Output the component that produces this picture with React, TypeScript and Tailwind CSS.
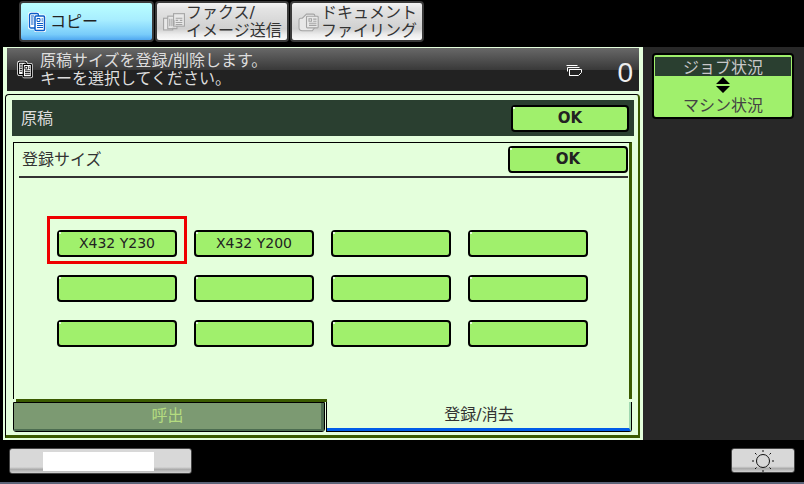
import type { ReactNode } from 'react';

const font = { fontFamily: '"DejaVu Sans", "Noto Sans CJK JP", sans-serif' };

function CopyIcon({ ink, bg = '#fff', w = 20, h = 22 }: { ink: string; bg?: string; w?: number; h?: number }) {
  return (
    <svg width={w} height={h} viewBox="0 0 20 22" aria-hidden>
      <path d="M1 3.500Q1 1 3.500 1h7Q13 1 13 3.500h3.500Q19 3.500 19 6v13.500Q19 21 17 21H8.500Q7 21 7 18.500H3Q1 18.500 1 16z" fill={bg} />
      <rect x="2.500" y="2.500" width="9" height="14.500" rx="1.500" fill="none" stroke={ink} strokeWidth="1.300" />
      <rect x="8" y="5" width="9.500" height="14.500" rx="1" fill={bg} stroke={ink} strokeWidth="1.500" />
      <path d="M10 7.500h3v3h-3zM14.500 8h1.500M14.500 10h1.500M10 12.500h6M10 14.500h6M10 16.500h6M4 5h3M4 7h2.500M4 9h2.500M4 11h2.500M4 13h2.500" fill="none" stroke={ink} strokeWidth="1" />
    </svg>
  );
}

function FaxIcon() {
  return (
    <svg width="24" height="20" viewBox="0 0 28 24" fill="#e8e8e8" stroke="#a4a4a4" strokeWidth="1.300" aria-hidden>
      <rect x="1.500" y="7.500" width="11" height="14" />
      <rect x="6.500" y="5" width="11" height="15" />
      <rect x="13.500" y="2" width="13" height="15" />
      <path d="M9 8v9M11.500 8v9M14 10v6M16 19.500h-4M16 7.500h8M16 10h3M21 10h3M16 12.500h8M16 15h8" fill="none" />
    </svg>
  );
}

function FilingIcon() {
  return (
    <svg width="24" height="20" viewBox="0 0 28 24" fill="#e8e8e8" stroke="#a4a4a4" strokeWidth="1.300" aria-hidden>
      <path d="M2 9.500q0-2 2-2h2l5-5h8q2 0 2 2v14l-3 4H6q-4 0-4-4z" />
      <rect x="11" y="5" width="14" height="14" rx="1" />
      <path d="M14 8h3v3h-3zM19 8.500h4M19 11h4M14 13.500h9M14 16h9" fill="none" />
    </svg>
  );
}

function TopTab({ active, icon, children, w }: { active?: boolean; icon: ReactNode; children: ReactNode; w: string }) {
  return (
    <div
      className={`flex h-[41px] items-center rounded-[4px] border-2 border-[#3a3a3a] ${w} ${
        active
          ? 'bg-[linear-gradient(#baffff,#a8eeff_45%,#78ccfa_85%,#50a8f0)] text-[#222]'
          : 'bg-[linear-gradient(#f4f4f4,#e4e4e4_15%,#d0d0d0_70%,#ececec_85%,#fafafa)] text-[#333]'
      }`}
    >
      {icon}
      {children}
    </div>
  );
}

function GreenKey({ label, w = 'w-[120px]', h = 'h-[27px]', big }: { label?: string; w?: string; h?: string; big?: boolean }) {
  return (
    <div
      className={`relative flex items-center justify-center rounded-[4px] border-2 border-black bg-[#a0f06c] text-[#222] ${w} ${h} ${
        big ? 'text-[15px] font-bold' : 'text-[14px]'
      }`}
    >
      <span className="absolute left-0 top-0 h-[2px] w-[2px] bg-[#e8ffe0]" />
      {label}
    </div>
  );
}

function Sun() {
  return (
    <svg width="22" height="22" viewBox="0 0 22 22" fill="none" stroke="#111" strokeWidth="1" aria-hidden>
      <circle cx="11" cy="11" r="6.500" />
      <path d="M11 0v2M11 20v2M0 11h2M20 11h2M3 3l1.500 1.500M17.500 17.500L19 19M3 19l1.500-1.500M17.500 4.500L19 3" />
    </svg>
  );
}

export default function App() {
  const keys = [
    'X432 Y230', 'X432 Y200', '', '',
    '', '', '', '',
    '', '', '', '',
  ];

  return (
    <div className="flex h-[484px] w-[804px] flex-col overflow-hidden bg-black" style={font}>
      {/* top tabs */}
      <div className="flex h-[47px] gap-[1px] pl-[19px] pt-[1px]">
        <TopTab active w="w-[135px]" icon={<span className="ml-[6px] mr-[3px] flex"><CopyIcon ink="#0a5cc8" /></span>}>
          <span className="text-[16px]">コピー</span>
        </TopTab>
        <TopTab w="w-[134px]" icon={<span className="ml-[5px] flex"><FaxIcon /></span>}>
          <span className="whitespace-nowrap text-[16px] leading-[18px]">ファクス/<br />イメージ送信</span>
        </TopTab>
        <TopTab w="w-[134px]" icon={<span className="ml-[5px] flex"><FilingIcon /></span>}>
          <span className="whitespace-nowrap text-[16px] leading-[18px]">ドキュメント<br />ファイリング</span>
        </TopTab>
      </div>

      {/* middle */}
      <div className="flex h-[393px]">
        <div className="ml-[3px] flex w-[640px] flex-col bg-[#e4ffdc] pl-[2px] pt-[1px]">
          {/* message bar */}
          <div className="ml-[2px] flex h-[43px] w-[632px] items-center bg-[linear-gradient(#686868,#3a3a3a_50%,#222_50%,#222)]">
            <span className="ml-[9px] mr-[6px] flex"><CopyIcon ink="#000" w={18} h={19} /></span>
            <div className="flex-1 text-[16px] leading-[18px] text-[#ddd]">
              原稿サイズを登録/削除します。<br />キーを選択してください。
            </div>
            <svg width="18" height="14" viewBox="0 0 18 14" fill="none" stroke="#fff" aria-hidden className="mr-[34px] mt-[3px]">
              <path d="M1.500 1.500h11M2.500 3.500h12M4.500 5.500h12v3l-3 3h-9zM2.500 3.500v4M4.500 5.500v6" />
            </svg>
            <span className="mr-[6px] mt-[6px] text-[28px] leading-none text-[#eee]" style={{ fontFamily: '"Liberation Sans", sans-serif' }}>0</span>
          </div>

          {/* outer panel */}
          <div className="mt-[3px] flex h-[344px] w-[635px] flex-col rounded-t-[4px] border-b-[3px] border-l border-r-[2px] border-t border-b-[#3a5a00] border-l-black border-r-[#3a5a00] border-t-black pb-[3px] pl-[6px] pr-[4px] pt-[5px]">
            <div className="flex h-[36px] shrink-0 items-center justify-between bg-[#2a3f30] pl-[9px] pr-[5px] text-[#ddd]">
              <span className="mt-[1px] text-[16px]">原稿</span>
              <GreenKey label="OK" w="w-[118px]" big />
            </div>

            {/* inner panel */}
            <div className="ml-[1px] mr-[2px] mt-[6px] flex min-h-0 flex-1 flex-col">
              <div className="flex min-h-0 flex-1 flex-col border-l border-r-[3px] border-t border-l-black border-r-[#3a5a00] border-t-black">
                <div className="ml-[5px] mr-[1px] flex h-[35px] shrink-0 items-center justify-between border-b-2 border-[#333] pb-[3px] pl-[3px] pt-[3px]">
                  <span className="text-[16px] text-[#333]">登録サイズ</span>
                  <GreenKey label="OK" big />
                </div>

                <div className="relative ml-[43px] mt-[52px] grid w-[531px] grid-cols-4 gap-x-[17px] gap-y-[18px]">
                  {keys.map((k, i) => (
                    <GreenKey key={i} label={k} />
                  ))}
                  <div className="absolute left-[-10px] top-[-14px] h-[48px] w-[140px] border-[3px] border-[#ee0000]" />
                </div>
              </div>

              {/* bottom tabs */}
              <div className="flex h-[33px] shrink-0">
                <div className="flex w-[312px] flex-col">
                  <div className="ml-[3px] mr-[-2px] h-[3px] shrink-0 bg-[#3a5a00]" />
                  <div className="flex flex-1 rounded-b-[3px] border border-black">
                    <div className="flex flex-1 items-center justify-center border-b-[2px] border-r-[3px] border-b-[#4c6c50] border-r-[#4c6c50] bg-[#7c9a72] text-[16px] text-[#b4dc80]">
                      呼出
                    </div>
                  </div>
                </div>
                <div className="ml-[1px] mt-[3px] flex flex-1 flex-col rounded-br-[3px] border-b border-l border-r border-black">
                  <div className="flex flex-1 items-center justify-center border-b-[3px] border-r-[2px] border-b-[#005ce8] border-r-[#a0d8b0] pl-[2px] text-[16px] text-[#333]">
                    登録/消去
                  </div>
                </div>
              </div>
            </div>
          </div>
        </div>

        {/* right column */}
        <div className="flex-1 bg-[#282828] pl-[9px] pt-[6px]">
          <div className="flex h-[66px] w-[142px] flex-col items-center rounded-[4px] border-[2px] border-black bg-[#a0f06c] px-[1px] pt-[2px] text-[16px] leading-[18px] text-[#444]">
            <div className="h-[19px] w-full bg-[#2a3f30] text-center leading-[21px] text-[#c8c8c8]">ジョブ状況</div>
            <svg width="16" height="18" viewBox="0 0 16 18" className="mb-[3px]" aria-hidden>
              <path d="M8 1l7 7H1zM1 10h14l-7 7z" fill="#000" />
            </svg>
            <div>マシン状況</div>
          </div>
        </div>
      </div>

      {/* bottom */}
      <div className="flex flex-1 items-start justify-between border-b-2 border-[#5c6478] pl-[9px] pr-[9px] pt-[8px]">
        <div className="flex h-[26px] w-[183px] rounded-[3px] border border-[#444] bg-[linear-gradient(#d8d8d8_75%,#aaa_85%,#d0d0d0)] pl-[33px]">
          <div className="mt-[3px] h-[19px] w-[111px] bg-white" />
        </div>
        <div className="flex h-[25px] w-[64px] items-center justify-center rounded-[3px] border border-[#444] bg-[linear-gradient(#d8d8d8_75%,#aaa_85%,#d0d0d0)]">
          <Sun />
        </div>
      </div>
    </div>
  );
}
